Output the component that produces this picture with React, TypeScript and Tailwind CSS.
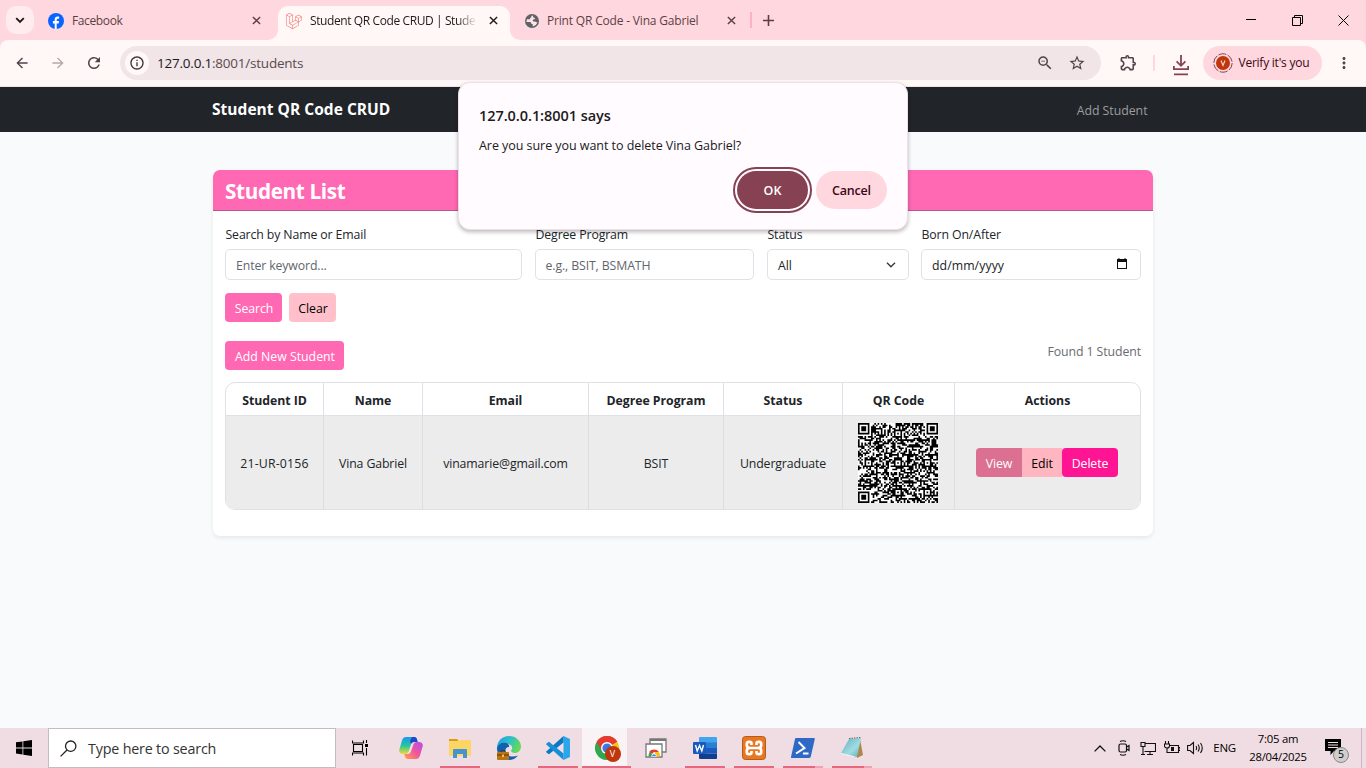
import React from "react";
import { SiLaravel } from "react-icons/si";
import {
  MdOutlineZoomOut,
  MdStarBorder,
  MdOutlineExtension,
  MdArrowBack,
  MdArrowForward,
  MdRefresh,
  MdInfoOutline,
  MdMoreVert,
} from "react-icons/md";

const N = 49;

function isReserved(r: number, c: number): boolean | null {
  const finder = (r0: number, c0: number): boolean | null => {
    const y = r - r0;
    const x = c - c0;
    if (y < -1 || y > 7 || x < -1 || x > 7) return null;
    if (y < 0 || y > 6 || x < 0 || x > 6) return false;
    if (y === 0 || y === 6 || x === 0 || x === 6) return true;
    return y >= 2 && y <= 4 && x >= 2 && x <= 4;
  };
  for (const [a, b] of [[0, 0], [0, N - 7], [N - 7, 0]]) {
    const v = finder(a, b);
    if (v !== null) return v;
  }
  for (const [a, b] of [[6, 24], [24, 6], [24, 24], [24, 42], [42, 24], [42, 42]]) {
    const d = Math.max(Math.abs(r - a), Math.abs(c - b));
    if (d <= 2) return d !== 1;
  }
  if (r === 6 || c === 6) return (r + c) % 2 === 0;
  return null;
}

function qrPath(): string {
  let seed = 20156;
  let d = "";
  for (let r = 0; r < N; r++) {
    for (let c = 0; c < N; c++) {
      seed = (seed * 1103515245 + 12345) % 2147483648;
      const v = isReserved(r, c);
      if (v === null ? (seed >> 12) % 100 < 54 : v) d += `M${c} ${r}h1v1h-1z`;
    }
  }
  return d;
}

const qr = qrPath();

function Close({ className }: { className: string }) {
  return (
    <svg viewBox="0 0 10 10" className={className} fill="none" stroke="currentColor" strokeWidth="1.6">
      <path d="M1 1l8 8M9 1L1 9" />
    </svg>
  );
}

function TabStrip() {
  return (
    <div className="flex h-10 shrink-0 bg-[#ffd7df]">
      <div className="ml-1.5 mt-1.5 flex h-7 w-7 shrink-0 items-center justify-center rounded-[10px] bg-[#ffecef]">
        <svg width="10" height="7" viewBox="0 0 10 7" fill="none" stroke="#201a1b" strokeWidth="1.9">
          <path d="M1.2 1.2L5 5l3.8-3.8" />
        </svg>
      </div>
      <div className="flex w-[238px] items-center pl-[14px] pt-px text-[#5c3f44]">
        <svg width="16" height="16" viewBox="0 0 16 16" className="shrink-0">
          <circle cx="8" cy="8" r="8" fill="#0866ff" />
          <path d="M6.7 16v-5.4H4.9V8.1h1.8V6.6c0-2.2 1.1-3.2 3-3.2.5 0 1 .05 1.4.15v2.2h-1c-1 0-1.4.4-1.4 1.3v1.05h2.3l-.4 2.5H8.7V16z" fill="#fff" />
        </svg>
        <span className="ml-2 text-xs tracking-[-0.38px]">Facebook</span>
        <Close className="ml-auto mr-[11px] h-[9px] w-[9px]" />
      </div>
      <div className="relative ml-[6px] mt-1.5 flex h-[34px] w-[232px] items-center rounded-t-[10px] bg-[#fff8f7] pl-2 text-[#201a1b]">
        <svg className="absolute -left-[10px] bottom-0 h-[10px] w-[10px]" viewBox="0 0 10 10">
          <path d="M10 0v10H0A10 10 0 0 0 10 0" fill="#fff8f7" />
        </svg>
        <svg className="absolute -right-[10px] bottom-0 h-[10px] w-[10px]" viewBox="0 0 10 10">
          <path d="M0 0v10h10A10 10 0 0 1 0 0" fill="#fff8f7" />
        </svg>
        <SiLaravel className="-mt-[5px] h-4 w-4 shrink-0 text-[#f2625a]" />
        <span className="-mt-[4px] ml-2 w-[167px] whitespace-nowrap text-xs tracking-[-0.4px] [mask-image:linear-gradient(to_right,black_88%,transparent)]">
          Student QR Code CRUD | Stude
        </span>
        <Close className="-mt-[5px] ml-[12px] h-[9px] w-[9px]" />
      </div>
      <div className="flex w-[230px] items-center pl-[15px] pt-px text-[#5c3f44]">
        <svg width="14" height="14" viewBox="0 0 14 14" className="shrink-0">
          <circle cx="7" cy="7" r="7" fill="#5f6368" />
          <path d="M7.800 1.500c-1.300.2-1.800 1-1.500 1.900-1.300 0-1.500.9-1.100 1.800H2C1.500 6 1.400 7 1.600 7.900h3.300c1.300 0 1.500 1.100 1.500 2.200h1.300v2.300c2.500-.2 4.300-2 4.700-4.300-.7.500-1.700.3-2.100-.5H8.500c-.9-.6-.9-1.900.1-2.300h1.300c.3-1.100 0-1.600-1.100-1.600-.7-.6-.8-1.400-1-2.200z" fill="#ffe3e8" />
        </svg>
        <span className="ml-2 whitespace-nowrap text-xs tracking-[-0.18px]">Print QR Code - Vina Gabriel</span>
        <Close className="ml-auto h-[9px] w-[9px] -translate-x-[4px]" />
      </div>
      <div className="ml-[10px] mt-3 h-4 w-[1.5px] bg-[#ffb1c1]" />
      <svg className="ml-[11px] mt-[15px] h-[11px] w-[11px]" viewBox="0 0 11 11" stroke="#5c3f44" strokeWidth="1.6">
        <path d="M5.5 0v11M0 5.5h11" />
      </svg>
      <div className="ml-auto flex items-center text-black">
        <svg width="10" height="10" viewBox="0 0 10 10" stroke="currentColor"><path d="M0 4.5h10" /></svg>
        <svg width="11" height="11" viewBox="0 0 11 11" className="ml-9" fill="none" stroke="currentColor">
          <path d="M.5 2.5h8v8h-8zM2.5 2.5v-2h8v8h-2" />
        </svg>
        <svg width="11" height="11" viewBox="0 0 11 11" className="ml-[35px] mr-[17px]" fill="none" stroke="currentColor">
          <path d="M.5.5l10 10M10.5.5l-10 10" />
        </svg>
      </div>
    </div>
  );
}

function Toolbar() {
  return (
    <div className="flex h-[47px] shrink-0 items-start bg-[#ffd7df]">
      <div className="flex h-[47px] w-full items-start rounded-t-lg border-b border-[#efe3e5] bg-[#fff8f7] pt-1.5 text-[#52434a]">
        <div className="flex h-[34px] w-[120px] items-center">
          <MdArrowBack className="ml-[14px] h-4 w-4 scale-[1.05]" />
          <MdArrowForward className="ml-5 h-4 w-4 scale-[1.05] text-[#b5a8aa]" />
          <MdRefresh className="ml-[19px] h-[18px] w-[18px]" />
        </div>
        <div className="flex h-[34px] w-[981px] items-center rounded-full bg-[#f1e5e8]">
          <div className="ml-[5px] flex h-6 w-6 items-center justify-center rounded-full bg-[#fff8f7]">
            <MdInfoOutline className="h-4 w-4 text-[#3d3336]" />
          </div>
          <span className="ml-2 text-[13.5px] tracking-[-0.22px] text-[#5b4a4f]">
            <span className="text-[#201a1b]">127.0.0.1</span>:8001/students
          </span>
          <MdOutlineZoomOut className="ml-auto h-[18px] w-[18px]" />
          <MdStarBorder className="ml-[14px] mr-[15px] h-[18px] w-[18px]" />
        </div>
        <div className="flex h-[34px] flex-1 items-center">
          <MdOutlineExtension className="ml-[18px] h-[19px] w-[19px] -translate-y-px" />
          <div className="ml-[15px] h-4 w-[1.5px] bg-[#ffd7df]" />
          <svg width="16" height="21" viewBox="0 0 16 21" className="ml-[18px] mt-[5px]" fill="none" stroke="#864153" strokeWidth="1.8">
            <path d="M8 0v10.5M3.6 6.4L8 10.8l4.4-4.4M.9 11v3.1h14.2V11M1 19.4h14" />
          </svg>
          <div className="ml-[14px] flex h-[34px] w-[119px] items-center rounded-full bg-[#ffd7df] text-[#3b0716]">
            <svg width="20" height="20" viewBox="0 0 20 20" className="ml-[10px]">
              <circle cx="10" cy="10" r="9.2" fill="none" stroke="#864153" strokeWidth="1" strokeDasharray="8 1.6" />
              <circle cx="10" cy="10" r="7" fill="#bf360c" />
              <path d="M8 7.5l2 5 2-5" fill="none" stroke="#f7d6cc" strokeWidth="1.1" />
            </svg>
            <span className="ml-[6px] whitespace-nowrap text-xs tracking-[-0.24px]">Verify it's you</span>
          </div>
          <MdMoreVert className="ml-[13px] h-[18px] w-[18px]" />
        </div>
      </div>
    </div>
  );
}

function Field({ label, width, children }: { label: string; width: string; children: React.ReactNode }) {
  return (
    <div className={width}>
      <div className="h-[24px] whitespace-nowrap pl-[0.5px] text-[12.3px] leading-[19px] tracking-[-0.12px]">{label}</div>
      <div className="flex h-[31px] items-center rounded-[5px] border border-[#dee2e6] bg-white pl-[10px] pr-[10px] pt-[3px] text-[12.3px] tracking-[-0.12px]">
        {children}
      </div>
    </div>
  );
}

const btn = "flex h-[29px] items-center justify-center whitespace-nowrap rounded text-[12.3px]";

function Card() {
  return (
    <div className="mx-auto h-[366px] w-[940px] rounded-[7px] bg-white shadow-[0_2px_4px_rgba(0,0,0,0.08)]">
      <div className="flex h-[41px] items-center rounded-t-[7px] border-b border-[#b8578a] bg-[#ff69b4] pl-3 pt-[3px] text-[20.7px] font-bold tracking-[-0.35px] text-white">
        Student List
      </div>
      <div className="px-[12px] pt-[14px]">
        <div className="flex gap-[13px]">
          <Field label="Search by Name or Email" width="w-[297px]"><span className="text-[#5f666d]">Enter keyword...</span></Field>
          <Field label="Degree Program" width="w-[219px]"><span className="-ml-[0.5px] text-[#5f666d]">e.g., BSIT, BSMATH</span></Field>
          <Field label="Status" width="w-[142px]">
            <span>All</span>
            <svg width="10" height="6" viewBox="0 0 10 6" className="-mt-[2px] ml-auto mr-[2px]" fill="none" stroke="#343a40" strokeWidth="1.4">
              <path d="M1 .8L5 4.8 9 .8" />
            </svg>
          </Field>
          <Field label="Born On/After" width="-ml-px w-[220px]">
            <span className="tracking-[0.06px]">dd/mm/yyyy</span>
            <svg width="10" height="11" viewBox="0 0 10 11" className="-mt-[5px] ml-auto mr-[3px]">
              <path d="M0 1h1.500V0h1v1h5V0h1v1H10v10H0zM1 4v6h8V4z" fill="#111" fillRule="evenodd" />
            </svg>
          </Field>
        </div>
        <div className="mt-[13px] flex gap-[7px]">
          <div className={`${btn} w-[57px] bg-[#ff69b4] pl-px pt-[3px] tracking-[-0.1px] text-white`}>Search</div>
          <div className={`${btn} w-[47px] bg-[#ffc0cb] pl-px pt-[3px] text-black`}>Clear</div>
        </div>
        <div className="mt-[19px] flex h-[41px] justify-between">
          <div className={`${btn} w-[119px] bg-[#ff69b4] pl-px pt-[3px] text-white`}>Add New Student</div>
          <span className="pt-px text-[12.3px] leading-5 tracking-[-0.08px] text-[#666c72]">Found 1 Student</span>
        </div>
        <div className="h-[128px] w-[916px] overflow-hidden rounded-[10px] border border-[#dee2e6] text-[12.3px]">
          <div className="grid h-[33px] grid-cols-[98px_99px_166px_135px_119px_112px_1fr] divide-x divide-[#dee2e6] border-b border-[#dee2e6] text-center font-bold leading-[35px] tracking-[-0.04px]">
            {["Student ID", "Name", "Email", "Degree Program", "Status", "QR Code", "Actions"].map((h) => (
              <div key={h}>{h}</div>
            ))}
          </div>
          <div className="grid h-[93px] grid-cols-[98px_99px_166px_135px_119px_112px_1fr] divide-x divide-[#dcdfe2] bg-[#ececec] text-center leading-[95px] tracking-[-0.12px]">
            <div className="tracking-[0.16px]">21-UR-0156</div>
            <div>Vina Gabriel</div>
            <div>vinamarie@gmail.com</div>
            <div>BSIT</div>
            <div>Undergraduate</div>
            <div className="flex items-center justify-center pb-px pr-[2px]">
              <svg width="80" height="80" viewBox="0 0 49 49" className="bg-white">
                <path d={qr} fill="#000" />
              </svg>
            </div>
            <div className="flex items-center justify-center pb-[2px] pr-[2px] leading-[29px]">
              <div className={`${btn} w-[46px] rounded-r-none bg-[#db7093] pl-px pt-[2px] text-white`}>View</div>
              <div className={`${btn} w-[40px] rounded-none bg-[#ffb6c1] pl-px pt-[2px] text-black`}>Edit</div>
              <div className={`${btn} w-[56px] bg-[#ff1493] pl-px pt-[2px] text-white`}>Delete</div>
            </div>
          </div>
        </div>
      </div>
    </div>
  );
}

function ConfirmDialog() {
  return (
    <div className="absolute left-[458px] top-[82px] h-[148px] w-[450px] rounded-xl border border-[#efdfe4] bg-[#fffbff] px-5 pt-[23px] text-[#201a1b] shadow-[0_2px_4px_rgba(0,0,0,0.28)]">
      <div className="whitespace-nowrap text-[14.5px] font-semibold leading-5 tracking-[-0.06px]">127.0.0.1:8001 says</div>
      <div className="mt-[10px] whitespace-nowrap text-[12.5px] leading-5 tracking-[-0.05px]">Are you sure you want to delete Vina Gabriel?</div>
      <div className="mt-[15px] flex justify-end gap-[8px] text-[12.5px] font-semibold">
        <div className="flex h-[38px] w-[71px] items-center justify-center rounded-full bg-[#864153] pt-[2px] text-white outline-2 outline-offset-2 outline-[#864153]">OK</div>
        <div className="flex h-[38px] w-[71px] items-center justify-center rounded-full bg-[#ffd7df] pt-[2px] tracking-[-0.2px] text-[#3b0716]">Cancel</div>
      </div>
    </div>
  );
}

function Slot({ children, open, active, stacked }: { children: React.ReactNode; open?: boolean; active?: boolean; stacked?: boolean }) {
  return (
    <div className={`flex h-10 w-[49px] flex-col items-center ${active ? "bg-linear-to-r from-[#faf3f6] from-[45px] to-[#f0dde3] to-[45px]" : ""}`}>
      <div className="flex h-[38px] items-center justify-center pt-[2px]">{children}</div>
      {open && (
        <div className={`flex h-[2px] ${active ? "w-[49px]" : "w-10"}`}>
          <div className={`h-[2px] bg-[#e8677f] ${stacked ? "w-8" : "w-full"}`} />
          {stacked && <div className="h-[2px] w-2 bg-[#efa3b0]" />}
        </div>
      )}
    </div>
  );
}

function Taskbar() {
  return (
    <div className="flex h-10 shrink-0 bg-[#f0dde3] text-black">
      <div className="flex w-12 items-center justify-center">
        <svg width="16" height="16" viewBox="0 0 16 16">
          <path d="M0 2.3L6.5 1.4v6.1H0zM7.3 1.2L16 0v7.5H7.3zM0 8.4h6.5v6.1L0 13.6zM7.3 8.4H16V16l-8.7-1.2z" />
        </svg>
      </div>
      <div className="flex w-[288px] items-center border border-[#c4bcc0] bg-white pl-[11px]">
        <svg width="17" height="17" viewBox="0 0 17 17" fill="none" stroke="#222" strokeWidth="1.3">
          <circle cx="10.7" cy="6.2" r="5.2" />
          <path d="M7 10L.6 16.4" />
        </svg>
        <span className="ml-[11px] pt-[2px] text-[14.3px] tracking-[-0.18px] text-[#333]">Type here to search</span>
      </div>
      <div className="flex w-[50px] items-center pl-[15.5px]">
        <svg width="17" height="16" viewBox="0 0 17 16" fill="none" stroke="#000" strokeWidth="1.1">
          <path d="M.5.5v2.5h11V.5M1.500 4.500v7h9v-7zM.5 15.500V13h11v2.500M14.500 0v3M14.500 8v7.500" />
          <path d="M13 4h3v3h-3z" fill="#000" stroke="none" />
        </svg>
      </div>
      <Slot>
        <svg width="24" height="22" viewBox="0 0 24 22">
          <defs>
            <linearGradient id="cpA" x1="0" y1="0" x2="0" y2="1">
              <stop offset="0" stopColor="#2196f3" /><stop offset=".5" stopColor="#21c6a0" /><stop offset="1" stopColor="#f5d832" />
            </linearGradient>
            <linearGradient id="cpB" x1="1" y1="0" x2="0" y2="1">
              <stop offset="0" stopColor="#b14df0" /><stop offset=".5" stopColor="#f0569c" /><stop offset="1" stopColor="#ffa24d" />
            </linearGradient>
          </defs>
          <path d="M7 0h8c2 0 2.6 1 3 2.5L18.6 5H15c-1.600 0-2.500 1-3 2.500L9.800 14c-.6 2-1.500 3-3.500 3H4c-3 0-4.500-2-3.500-5L3 3.500C3.800 1 5 0 7 0z" fill="url(#cpA)" />
          <path d="M13 0h2c2 0 2.600 1 3 2.500L18.600 5H15c-1.500 0-2.500.8-3 2L11 4z" fill="#1a49c9" />
          <path d="M17 22H9c-2 0-2.600-1-3-2.500L5.400 17H9c1.600 0 2.500-1 3-2.500L14.200 8c.6-2 1.500-3 3.500-3H20c3 0 4.500 2 3.500 5L21 18.500c-.8 2.500-2 3.500-4 3.500z" fill="url(#cpB)" />
        </svg>
      </Slot>
      <Slot open>
        <svg width="22" height="20" viewBox="0 0 22 20">
          <path d="M0 1h8l2 2.500H0z" fill="#d99b18" />
          <path d="M0 3h10l1-1h10q1 0 1 1v15H0z" fill="#fcd565" />
          <path d="M4 20v-8q0-1 1-1h12q1 0 1 1v8h-4v-4H8v4z" fill="#4593ce" />
        </svg>
      </Slot>
      <Slot>
        <svg width="24" height="24" viewBox="0 0 24 24">
          <defs>
            <linearGradient id="edA" x1="0" y1="0" x2="1" y2=".4">
              <stop offset="0" stopColor="#1b9de2" /><stop offset=".55" stopColor="#2fc0c7" /><stop offset="1" stopColor="#66d85c" />
            </linearGradient>
          </defs>
          <path d="M0 12C0 5 5 0 12 0s12 5 12 10.500C24 14.500 21 17 18 17c-3.500 0-4.500-1.500-3.500-3 2-3.500-1-6-4.500-6-5 0-8 3-10 7z" fill="url(#edA)" />
          <path d="M0 12c1-4 5-6 9-5 3 .8 3.500 3 3 4-3 0-4 2.500-3.500 5C9.500 20 15 22 21 19.500 18.500 22.500 15.500 24 12 24 5 24 0 19 0 12z" fill="#1261b0" />
          <rect x="0" y="16" width="12" height="8" rx="1" fill="#b87414" />
          <path d="M4 16v-1.500h4V16M0 19h12" fill="none" stroke="#573609" strokeWidth="1" />
          <path d="M5 18.500h2V21H5z" fill="#f4c04b" />
        </svg>
      </Slot>
      <Slot open>
        <svg width="24" height="24" viewBox="0 0 24 24">
          <path d="M17.500 0L24 3v18l-6.500 3z" fill="#2ba6ea" />
          <path d="M17.500 0v6.500L3 18.200 1 17l-1-1.200z" fill="#0879c2" />
          <path d="M17.500 24v-6.500L3 5.800 1 7 0 8.200z" fill="#168ed8" />
        </svg>
      </Slot>
      <Slot open active>
        <div className="relative h-6 w-6">
          <svg width="24" height="24" viewBox="0 0 24 24">
            <path d="M12 12L1.600 6A12 12 0 0 1 22.400 6z" fill="#e33b2e" />
            <path d="M12 12L22.400 6A12 12 0 0 1 12 24z" fill="#fbc116" />
            <path d="M12 12v12A12 12 0 0 1 1.600 6z" fill="#2da94f" />
            <path d="M12 6h10.400A12 12 0 0 0 1.600 6l5.200 9z" fill="#e33b2e" />
            <circle cx="12" cy="12" r="6" fill="#fff" />
            <circle cx="12" cy="12" r="4.600" fill="#3b78e7" />
          </svg>
          <div className="absolute left-[10px] top-[10px] flex h-4 w-4 items-center justify-center rounded-full bg-[#bf360c] text-[9px] text-white">V</div>
        </div>
      </Slot>
      <Slot>
        <svg width="22" height="20" viewBox="0 0 22 20">
          <path d="M5 1h16v13H5z" fill="#fff" stroke="#777" strokeWidth="1.300" />
          <path d="M5 1h16v2H5z" fill="#777" />
          <path d="M1 6h16v13H1z" fill="#fff" stroke="#777" strokeWidth="1.300" />
          <path d="M3.500 18.400a5.500 5.500 0 0 1 1.300-4.400L9 18.400z" fill="#2da94f" />
          <path d="M4 14a6.300 6.300 0 0 1 10 0H9l-2 2z" fill="#e33b2e" />
          <path d="M10 14h4a6 6 0 0 1 1 4.400h-5z" fill="#fbc116" />
          <path d="M6.500 18.400a2.500 2.500 0 0 1 5 0z" fill="#3b78e7" stroke="#fff" strokeWidth=".7" />
        </svg>
      </Slot>
      <Slot open>
        <svg width="24" height="22" viewBox="0 0 24 22">
          <path d="M7 0h16q1 0 1 1v5H6V1q0-1 1-1z" fill="#41a5ee" />
          <path d="M6 5.500h18V11H6z" fill="#2b7cd3" />
          <path d="M6 11h18v5.500H6z" fill="#185abd" />
          <path d="M6 16.500h18V21q0 1-1 1H7q-1 0-1-1z" fill="#103f91" />
          <rect x="0" y="5" width="13" height="12" rx="1" fill="#185abd" />
          <path d="M2.500 8l1.700 6L6.500 8.500 8.800 14l1.700-6" fill="none" stroke="#fff" strokeWidth="1.400" />
        </svg>
      </Slot>
      <Slot open>
        <svg width="24" height="24" viewBox="0 0 24 24">
          <rect x=".5" y=".5" width="23" height="23" rx="3" fill="#e87722" stroke="#b95a12" />
          <path d="M9.500 9V7.500Q9.500 5.800 7.500 5.800H6.800Q4.800 5.800 4.800 8v1.200Q4.800 12 8 12h8q3.200 0 3.200-2.800V8q0-2.200-2-2.200h-.7q-2 0-2 1.700V9M9.500 15v1.500q0 1.700-2 1.700h-.7q-2 0-2-2.200v-1.200Q4.800 12 8 12h8q3.200 0 3.200 2.800V16q0 2.200-2 2.200h-.7q-2 0-2-1.700V15" fill="none" stroke="#fff" strokeWidth="2.700" />
        </svg>
      </Slot>
      <Slot open stacked>
        <svg width="24" height="20" viewBox="0 0 24 20">
          <path d="M5 0h18q1 0 .8 1l-4 17.500Q19.500 20 18 20H1q-1.200 0-1-1L4 1q.2-1 1-1z" fill="#2f69c6" />
          <path d="M7.500 4l6 6L5 15.500M12 15.500h5.500" fill="none" stroke="#fff" strokeWidth="2" />
        </svg>
      </Slot>
      <Slot open stacked>
        <svg width="24" height="22" viewBox="0 0 24 22">
          <defs>
            <linearGradient id="np" x1="0" y1="0" x2="1" y2="1"><stop offset="0" stopColor="#5dadbd" /><stop offset=".6" stopColor="#a2dce3" /><stop offset="1" stopColor="#5aaab6" /></linearGradient>
          </defs>
          <path d="M20 2l3 16-6 3-3-1z" fill="#a9894e" />
          <path d="M9 2l12-1-4 19L1 16z" fill="url(#np)" />
          <path d="M9 1.500l12-1" stroke="#666" strokeDasharray="1.500 1" />
          <path d="M1 16l16 4v1L1 17z" fill="#e7f5f6" />
        </svg>
      </Slot>
      <div className="ml-auto flex items-center">
        <svg width="12" height="7" viewBox="0 0 12 7" fill="none" stroke="#111" strokeWidth="1.300"><path d="M.6 6.400L6 1l5.400 5.400" /></svg>
        <svg width="12" height="16" viewBox="0 0 12 16" className="ml-3" fill="none" stroke="#111" strokeWidth="1.200">
          <rect x="1" y="4" width="7.500" height="8" rx="1.500" /><path d="M8.500 7l2.500-1.500v5L8.500 9M2 1.500Q5 0 8 1.500M2 14.500q3 1.500 6 0" />
        </svg>
        <svg width="16" height="15" viewBox="0 0 16 15" className="ml-[10px] mr-px" fill="none" stroke="#111" strokeWidth="1.100">
          <path d="M5.500 2.500h10v8H4.500M1 1.500h4v4H1zM3 5.500v8M1 13.500h4M10 10.500v3M7 13.500h6" />
        </svg>
        <svg width="16" height="14" viewBox="0 0 16 14" className="ml-[7px] mr-px" fill="none" stroke="#111" strokeWidth="1.100">
          <path d="M5.500 4.500h9v7h-10M14.500 6.500h1.500v3h-1.500M1.500 0v3M4.500 0v3M.5 3h5v2q0 2-2.500 2t-2.500-2zM3 7v4.500h3" /><path d="M7 6h3v4H7z" fill="#111" stroke="none" />
        </svg>
        <svg width="17" height="14" viewBox="0 0 17 14" className="ml-[6px]" fill="none" stroke="#111" strokeWidth="1.100">
          <path d="M.6 4.500H3L6.500 1.500v11L3 9.500H.6zM9 5q1.200 2 0 4M11 3.500q2.500 3.500 0 7M13.500 2q3.500 5 0 10" />
        </svg>
        <span className="ml-[9px] text-[11.5px] tracking-[-0.2px]">ENG</span>
        <div className="ml-[11px] w-[62px] whitespace-nowrap text-center text-[11.3px] leading-[18px] tracking-[-0.25px]">
          <div>7:05 am</div>
          <div>28/04/2025</div>
        </div>
        <div className="relative ml-[16px] mr-[9px] h-6 w-[27px]">
          <svg width="17" height="17" viewBox="0 0 17 17" className="mt-[3px]">
            <path d="M0 0h16v12H9l-3.500 4v-4H0z" /><path d="M3 3.500h10M3 6h10M3 8.500h10" stroke="#f0dde3" strokeWidth="1" />
          </svg>
          <div className="absolute left-[8px] top-[11px] flex h-4 w-4 items-center justify-center rounded-full border border-[#888] bg-[#d0cdcf] text-[10.5px]">5</div>
        </div>
        <div className="h-10 w-[5px] border-l border-[#cdb9c0]" />
      </div>
    </div>
  );
}

export default function App() {
  return (
    <div className="relative flex h-[768px] w-[1366px] flex-col overflow-hidden bg-[#f8fafc] font-['Open_Sans','Noto_Sans',sans-serif] text-[#212529]">
      <TabStrip />
      <Toolbar />
      <nav className="flex h-[45px] shrink-0 items-center justify-between bg-[#212529] pl-[212px] pr-[218.5px]">
        <span className="text-[15.5px] font-bold tracking-[0.03px] text-white">Student QR Code CRUD</span>
        <span className="pt-[3px] text-[12.3px] tracking-[-0.02px] text-[#9b9d9f]">Add Student</span>
      </nav>
      <main className="flex-1 pt-[38px]">
        <Card />
      </main>
      <Taskbar />
      <ConfirmDialog />
    </div>
  );
}
